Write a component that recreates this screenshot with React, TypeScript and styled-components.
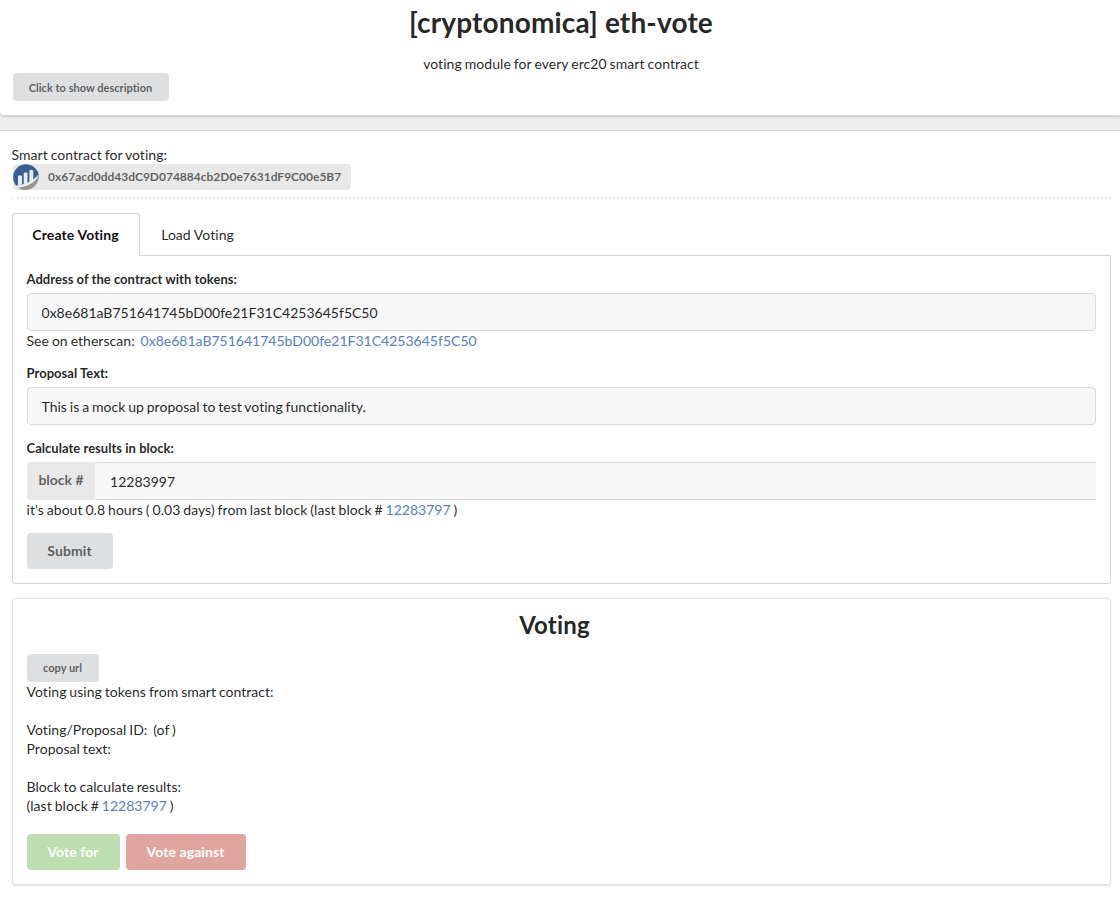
import React from "react";
import styled, { createGlobalStyle } from "styled-components";

const lato = `Lato, "Helvetica Neue", Arial, Helvetica, sans-serif`;

const GlobalStyle = createGlobalStyle`
  *, *::before, *::after { box-sizing: border-box; }
  html, body { margin: 0; padding: 0; }
  body {
    background: #fff;
    color: rgba(0, 0, 0, 0.87);
    font-family: ${lato};
    font-size: 14px;
    line-height: 19px;
    font-variant-ligatures: none;
    overflow: hidden;
  }
`;

const Page = styled.div`
  width: 100%;
  height: 899px;
  background: #fff;
`;

const Banner = styled.div`
  background: #eee;
  height: 131px;
  border-bottom: 1px solid #d4d4d5;
`;

const Header = styled.header`
  height: 116px;
  padding: 4px 11px 0 13px;
  background: #fff;
  border-bottom: 1px solid #d4d4d5;
  border-bottom-left-radius: 4px;
  box-shadow: 0 1px 2px 0 rgba(34, 36, 38, 0.15);
`;

const Title = styled.h1`
  margin: 0;
  font-size: 28px;
  line-height: 36px;
  font-weight: 700;
  letter-spacing: 0.15px;
  text-align: center;
`;

const Subtitle = styled.p`
  margin: 14px 0 0;
  letter-spacing: 0.06px;
  word-spacing: -0.7px;
  text-align: center;
`;

const Button = styled.button<{ $size?: "tiny" | "normal"; $tone?: "grey" | "green" | "red"; $width: number }>`
  display: block;
  width: ${(p) => p.$width}px;
  height: ${(p) => (p.$size === "tiny" ? 28 : 36)}px;
  padding: 0 1px 0 0;
  border: 0;
  border-radius: 4px;
  font-family: ${lato};
  font-weight: 700;
  font-size: ${(p) => (p.$size === "tiny" ? 11 : 14)}px;
  font-variant-ligatures: none;
  letter-spacing: ${(p) => (p.$size === "tiny" ? 0.02 : 0.08)}px;
  line-height: 14px;
  text-align: center;
  white-space: nowrap;
  color: ${(p) => (p.$tone && p.$tone !== "grey" ? "#fff" : "rgba(0, 0, 0, 0.6)")};
  background: ${(p) => (p.$tone === "green" ? "#bddeb1" : p.$tone === "red" ? "#e0a59e" : "#dedfe1")};
`;

const DescriptionButton = styled(Button)`
  padding-top: 1px;
`;

const Main = styled.main`
  padding: 14px 9px 0 12px;
`;

const AddressLabel = styled.div`
  display: flex;
  align-items: center;
  width: 338px;
  height: 26px;
  margin: 0 0 7px 1px;
  border-radius: 4px;
  background: #e8e8e8;
  color: rgba(0, 0, 0, 0.6);
  font-size: 12px;
  font-weight: 700;
`;

const AddressText = styled.span`
  margin: 0 0 2px 9px;
  white-space: nowrap;
`;

const Divider = styled.div`
  height: 2px;
  margin-bottom: 14px;
  border-top: 2px dotted #ebebeb;
`;

const Tabs = styled.nav`
  display: flex;
  height: 43px;
  border-bottom: 1px solid #d4d4d5;
`;

const Tab = styled.div<{ $active?: boolean }>`
  height: 43px;
  width: ${(p) => (p.$active ? "128px" : "116px")};
  padding: 0 1px 1px 0;
  display: flex;
  align-items: center;
  justify-content: center;
  border: ${(p) => (p.$active ? "1px solid #d4d4d5" : "none")};
  border-bottom: 0;
  border-radius: 4px 4px 0 0;
  background: ${(p) => (p.$active ? "#fff" : "transparent")};
  font-weight: ${(p) => (p.$active ? 700 : 400)};
  letter-spacing: ${(p) => (p.$active ? 0.12 : 0.04)}px;
  color: ${(p) => (p.$active ? "rgba(0,0,0,.95)" : "rgba(0,0,0,.87)")};
`;

const Panel = styled.section`
  height: 328px;
  padding: 14px;
  border: 1px solid #d4d4d5;
  border-top: 0;
  border-radius: 0 0 4px 4px;
`;

const FieldLabel = styled.label`
  display: block;
  height: 19px;
  margin-bottom: 4px;
  font-size: 13px;
  font-weight: 700;
  letter-spacing: 0.03px;
  text-indent: -0.5px;
`;

const Input = styled.input`
  display: block;
  flex: 1;
  width: 100%;
  min-width: 0;
  height: 38px;
  padding: 1px 13.5px;
  border: 1px solid #d9d9da;
  border-radius: 4px;
  background: #f7f7f7;
  color: rgba(0, 0, 0, 0.87);
  font-family: ${lato};
  font-size: 14px;
  font-variant-ligatures: none;
  letter-spacing: 0.01px;
  word-spacing: -0.7px;
  outline: 0;
`;

const LabeledInput = styled.div`
  display: flex;

  ${Input} {
    border-left-color: transparent;
    border-right: 0;
    border-radius: 0;
    padding-left: 14px;
  }
`;

const InputTag = styled.div`
  width: 68px;
  height: 38px;
  border-radius: 4px 0 0 4px;
  background: #e8e8e8;
  color: rgba(0, 0, 0, 0.6);
  font-weight: 700;
  line-height: 35px;
  text-align: center;
`;

const Field = styled.div`
  margin-bottom: 14px;
`;

const Line = styled.div`
  min-height: 19px;
  letter-spacing: 0.04px;
  word-spacing: -0.7px;
  text-indent: -0.5px;
  white-space: pre;
`;

const Link = styled.a`
  color: #5580c9;
  letter-spacing: 0.01px;
  text-decoration: none;
`;

const VotingCard = styled.section`
  height: 287px;
  margin-top: 14px;
  padding: 10px 14px;
  border: 1px solid #dededf;
  border-radius: 4px;
  box-shadow: 0 1px 2px 0 rgba(34, 36, 38, 0.15);
`;

const VotingTitle = styled.h2`
  margin: 0 14px 13px 0;
  font-size: 24px;
  line-height: 32px;
  font-weight: 700;
  letter-spacing: 0.2px;
  text-align: center;
`;

const VoteActions = styled.div`
  display: flex;
  gap: 6px;
  margin-top: 19px;
`;

const EtherscanLogo = () => (
  <svg width="26" height="26" viewBox="0 0 26 26" aria-hidden="true">
    <path
      d="M3.4 21.9 C-1 17-1 9 4 4 C9-1 17-1 22 4 C24 6 25.4 8.3 25.8 11 C21 17 14 20.5 5.5 21.5Z"
      fill="#395f91"
    />
    <path d="M25.9 11 C26.7 18 21 26 13 26 C9.7 26 7 25 5 23.4 C15 22.5 22.5 18 25.9 11Z" fill="#979695" />
    <path
      d="M5 12.4Q5 11.4 6 11.4H8Q9 11.4 9 12.4V20.6L5 21.2ZM10.7 9.5Q10.7 8.5 11.7 8.5H13.5Q14.5 8.5 14.5 9.5V19.2L10.7 20.2ZM16.4 7Q16.4 6 17.4 6H19.3Q20.3 6 20.3 7V16.4L16.4 18.6Z"
      fill="#e9ecef"
    />
    <path d="M3.2 21.6 C13 20.6 20.8 16.8 25.6 10 C23.6 17.6 15 22.8 4.9 23.5Z" fill="#ececec" />
  </svg>
);

export default function App() {
  return (
    <Page>
      <GlobalStyle />
      <Banner>
        <Header>
          <Title>[cryptonomica] eth-vote</Title>
          <Subtitle>voting module for every erc20 smart contract</Subtitle>
          <DescriptionButton $size="tiny" $width={156}>Click to show description</DescriptionButton>
        </Header>
      </Banner>
      <Main>
        <Line>Smart contract for voting:</Line>
        <AddressLabel>
          <EtherscanLogo />
          <AddressText>0x67acd0dd43dC9D074884cb2D0e7631dF9C00e5B7</AddressText>
        </AddressLabel>
        <Divider />
        <Tabs>
          <Tab $active>Create Voting</Tab>
          <Tab>Load Voting</Tab>
        </Tabs>
        <Panel>
          <Field>
            <FieldLabel>Address of the contract with tokens:</FieldLabel>
            <Input readOnly value="0x8e681aB751641745bD00fe21F31C4253645f5C50" />
            <Line>{"See on etherscan:  "}<Link>0x8e681aB751641745bD00fe21F31C4253645f5C50</Link></Line>
          </Field>
          <Field>
            <FieldLabel>Proposal Text:</FieldLabel>
            <Input readOnly value="This is a mock up proposal to test voting functionality." />
          </Field>
          <Field>
            <FieldLabel>Calculate results in block:</FieldLabel>
            <LabeledInput>
              <InputTag>block #</InputTag>
              <Input readOnly value="12283997" />
            </LabeledInput>
            <Line>{"it's about 0.8 hours ( 0.03 days) from last block (last block # "}<Link>12283797</Link>{" )"}</Line>
          </Field>
          <Button $width={86}>Submit</Button>
        </Panel>
        <VotingCard>
          <VotingTitle>Voting</VotingTitle>
          <Button $size="tiny" $width={72}>copy url</Button>
          <Line>Voting using tokens from smart contract:</Line>
          <Line />
          <Line>{"Voting/Proposal ID:  (of )"}</Line>
          <Line>Proposal text:</Line>
          <Line />
          <Line>Block to calculate results:</Line>
          <Line>{"(last block # "}<Link>12283797</Link>{" )"}</Line>
          <VoteActions>
            <Button $width={93} $tone="green">Vote for</Button>
            <Button $width={120} $tone="red">Vote against</Button>
          </VoteActions>
        </VotingCard>
      </Main>
    </Page>
  );
}
